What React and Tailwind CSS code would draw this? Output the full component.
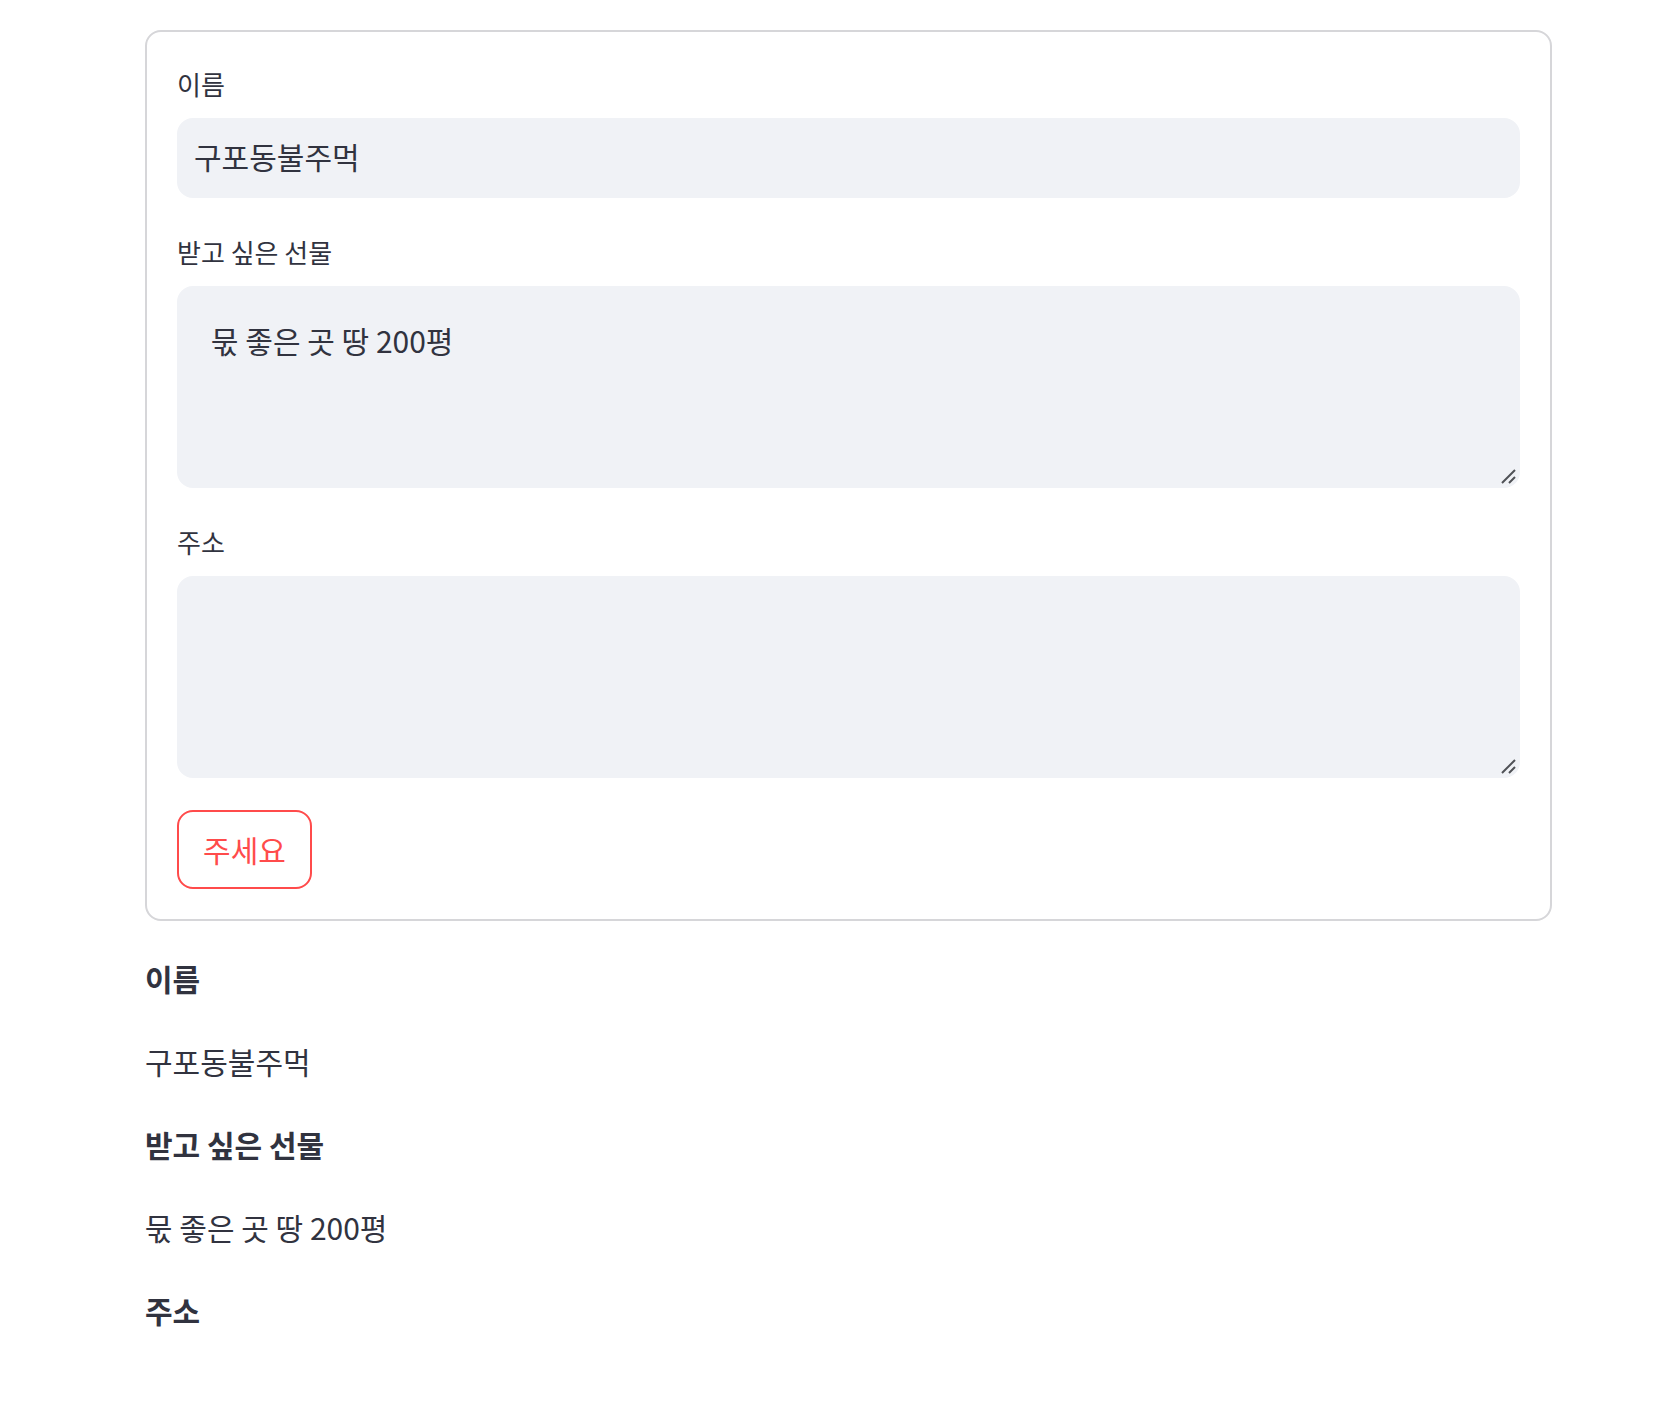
import React from 'react'

// ── Data ───────────────────────────────────────
const NAME = '구포동불주먹'
const GIFT = '묷 좋은 곳 땅 200평'
const ADDRESS = ''

function Label({ children }) {
  return (
    <div className="flex h-12 items-center mb-2 pb-[4px]">
      <span className="text-[26px] leading-none text-[#31333f]">{children}</span>
    </div>
  )
}

// resize grip drawn like the browser's one at 2x
function Grip() {
  return (
    <svg
      className="absolute right-[4px] bottom-[4px] pointer-events-none"
      width="16"
      height="16"
      viewBox="0 0 16 16"
    >
      <path d="M2 15 L15 2 M9 15 L15 9" stroke="#505257" strokeWidth="2" strokeLinecap="butt" fill="none" />
    </svg>
  )
}

function TextArea({ value }) {
  return (
    <div className="relative">
      <textarea
        defaultValue={value}
        className="block w-full h-[202px] resize-none rounded-2xl border-2 border-[#f0f2f6] bg-[#f0f2f6] pl-[32px] pt-[28px] pr-8 text-[30px] leading-[1.6] text-[#31333f] outline-none"
      />
      <Grip />
    </div>
  )
}

export default function App() {
  return (
    <div className="min-h-[1403px] bg-white pt-[30px] font-['Noto_Sans_CJK_KR','Noto_Sans',sans-serif]">
      <div className="ml-[145px] w-[1407px] flex flex-col gap-8">
        {/* Form */}
        <form
          className="rounded-2xl border-2 border-[#d6d6d9] p-[30px] flex flex-col"
          onSubmit={e => e.preventDefault()}
        >
          <Label>이름</Label>
          <input
            type="text"
            defaultValue={NAME}
            className="block w-full h-[80px] rounded-2xl border-2 border-[#f0f2f6] bg-[#f0f2f6] pl-[15px] pb-[4px] text-[30px] text-[#31333f] outline-none"
          />

          <div className="mt-8">
            <Label>받고 싶은 선물</Label>
            <TextArea value={GIFT} />
          </div>

          <div className="mt-8">
            <Label>주소</Label>
            <TextArea value={ADDRESS} />
          </div>

          <div className="mt-8">
            <button
              type="submit"
              className="w-[135px] h-[79px] rounded-2xl border-2 border-[#ff4b4b] bg-white text-[30px] text-[#ff4b4b] flex items-center justify-center"
            >
              주세요
            </button>
          </div>
        </form>

        {/* Submitted values */}
        <div className="flex flex-col gap-8 text-[#31333f]">
          <p className="text-[30px] font-bold leading-[51px]">이름</p>
          <p className="text-[30px] leading-[51px]">{NAME}</p>
          <p className="text-[30px] font-bold leading-[51px]">받고 싶은 선물</p>
          <p className="text-[30px] leading-[51px]">{GIFT}</p>
          <p className="text-[30px] font-bold leading-[51px]">주소</p>
          {ADDRESS && <p className="text-[30px] leading-[51px]">{ADDRESS}</p>}
        </div>
      </div>
    </div>
  )
}
